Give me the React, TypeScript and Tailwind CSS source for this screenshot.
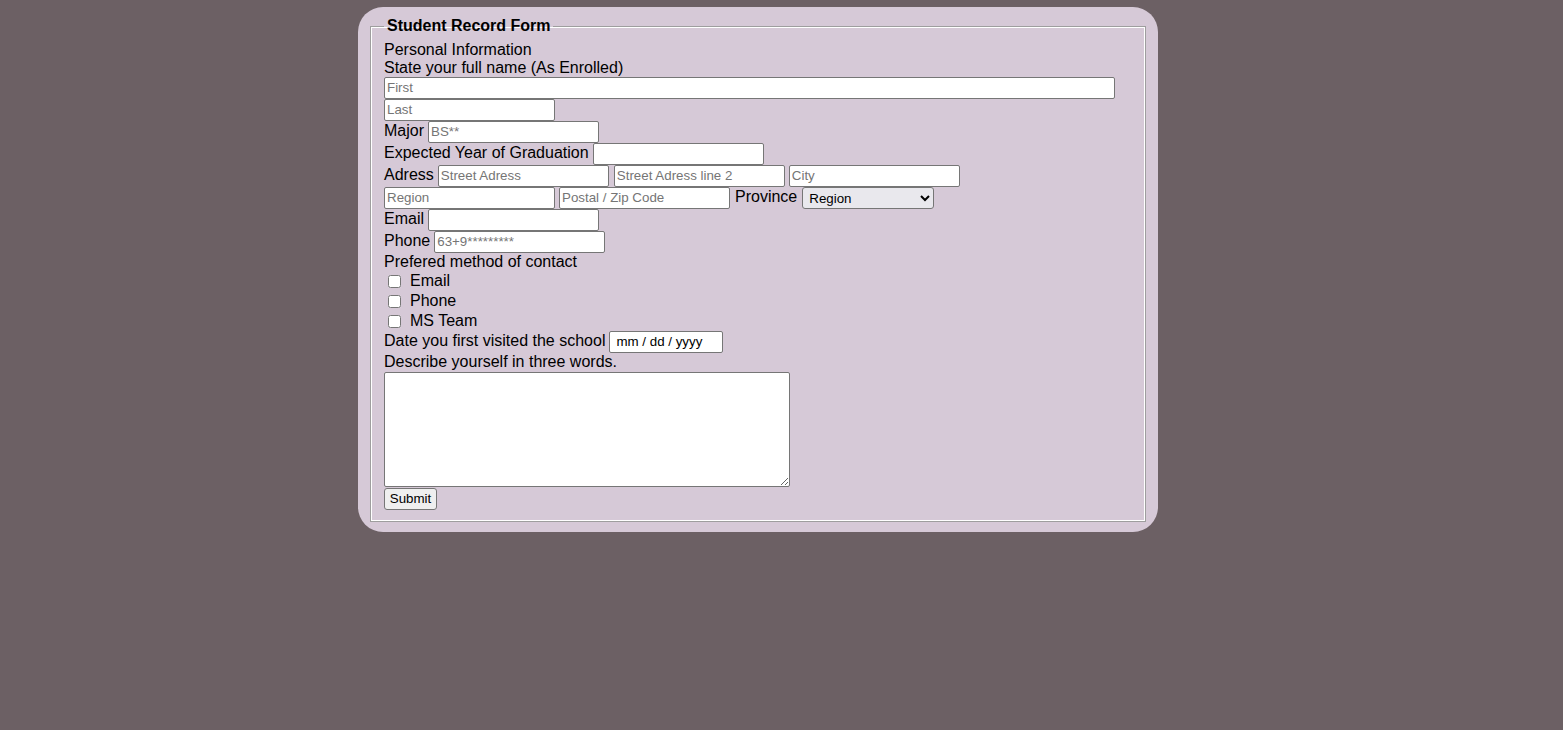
import type { ReactNode } from 'react'

const inputCls =
  'h-[22px] w-[171px] rounded-[2px] border border-[#767676] bg-white px-[2px] pb-[1px] text-[13.33px] text-black placeholder:text-[#757575] outline-none'

function Row({ children, className = 'items-baseline' }: { children: ReactNode; className?: string }) {
  return <div className={`flex h-[22px] gap-[4px] ${className}`}>{children}</div>
}

function Check({ label }: { label: string }) {
  return (
    <div className="flex h-[20px] items-center">
      <input type="checkbox" className="ml-[4px] mr-[3px] h-[13px] w-[13px]" />
      <span className="ml-[6px]">{label}</span>
    </div>
  )
}

export default function App() {
  return (
    <div className="min-h-screen bg-[#6c6064] pt-[7px] font-['Liberation_Sans',Arial,sans-serif] text-[16px] leading-[18px] text-black">
      <div className="ml-[358px] w-[800px] rounded-[25px] bg-[#d6c9d7] p-[10px]">
        <fieldset className="mx-[2px] border border-[#9e9e9e] px-[13px] pt-[6px] pb-[11px] shadow-[inset_0_0_0_1px_#ffffff]">
          <legend className="pl-[3px] pr-[2px] font-bold">Student Record Form</legend>

          <div className="flex flex-col">
            <div>Personal Information</div>
            <div>State your full name (As Enrolled)</div>
            <input className={`${inputCls} w-[731px]`} placeholder="First" />
            <input className={inputCls} placeholder="Last" />

            <Row>
              <span>Major</span>
              <input className={inputCls} placeholder="BS**" />
            </Row>
            <Row>
              <span>Expected Year of Graduation</span>
              <input className={inputCls} />
            </Row>
            <Row>
              <span>Adress</span>
              <input className={inputCls} placeholder="Street Adress" />
              <input className={`${inputCls} ml-[1px]`} placeholder="Street Adress line 2" />
              <input className={inputCls} placeholder="City" />
            </Row>
            <Row className="items-center">
              <input className={inputCls} placeholder="Region" />
              <input className={inputCls} placeholder="Postal / Zip Code" />
              <span className="ml-[1px] -mt-[2px]">Province</span>
              <select className="ml-[1px] h-[22px] w-[132px] rounded-[3px] border border-[#767676] bg-[#e9e8ed] pl-[2px] text-[13.33px] text-black">
                <option>Region</option>
                <option>NCR</option>
                <option>CALABARZON</option>
              </select>
            </Row>
            <Row>
              <span>Email</span>
              <input className={inputCls} type="email" />
            </Row>
            <Row>
              <span>Phone</span>
              <input className={inputCls} placeholder="63+9*********" />
            </Row>

            <div>Prefered method of contact</div>
            <Check label="Email" />
            <Check label="Phone" />
            <Check label="MS Team" />

            <Row>
              <span>Date you first visited the school</span>
              <input
                type="text"
                placeholder="mm / dd / yyyy"
                className="h-[22px] w-[114px] rounded-[2px] border border-[#767676] bg-white px-[6px] pb-[1px] text-[13.33px] text-black placeholder:text-black outline-none"
              />
            </Row>
            <div>Describe yourself in three words.</div>
            <textarea className="mt-[1px] h-[115px] w-[406px] rounded-[2px] border border-[#767676] bg-white p-[2px] text-[13.33px] outline-none" />
            <div className="mt-[1px]">
              <button className="h-[22px] w-[53px] rounded-[3px] border border-[#767676] bg-[#efefef] text-[13.33px] text-black">
                Submit
              </button>
            </div>
          </div>
        </fieldset>
      </div>
    </div>
  )
}
